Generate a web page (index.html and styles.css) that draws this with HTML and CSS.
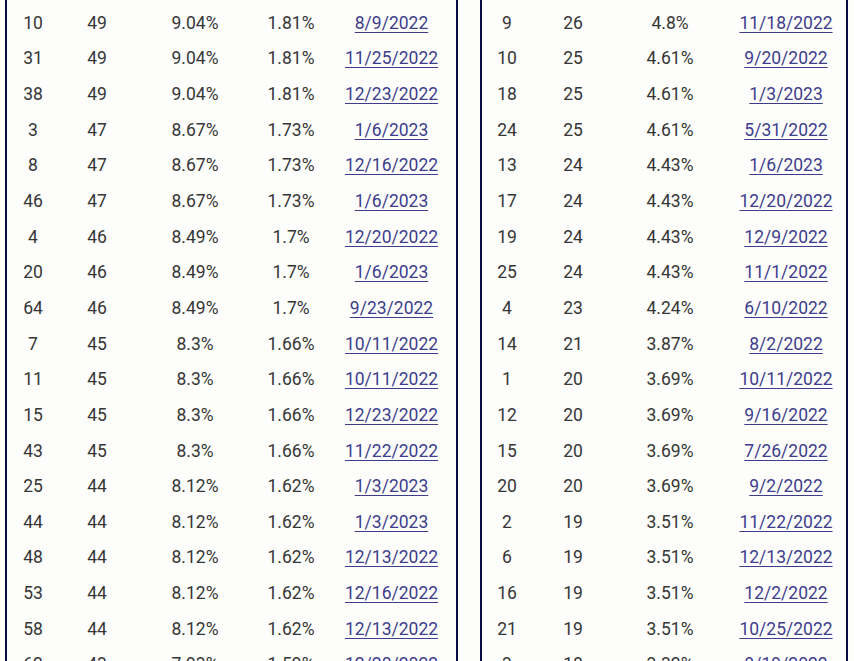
FILE: index.html
```html
<!DOCTYPE html>
<html>
<head>
<meta charset="utf-8">
<link rel="stylesheet" href="styles.css">
</head>
<body>
<div class="page">
  <div class="table left">
    <div class="row"><span>10</span><span>49</span><span>9.04%</span><span>1.81%</span><a href="#">8/9/2022</a></div>
    <div class="row"><span>31</span><span>49</span><span>9.04%</span><span>1.81%</span><a href="#">11/25/2022</a></div>
    <div class="row"><span>38</span><span>49</span><span>9.04%</span><span>1.81%</span><a href="#">12/23/2022</a></div>
    <div class="row"><span>3</span><span>47</span><span>8.67%</span><span>1.73%</span><a href="#">1/6/2023</a></div>
    <div class="row"><span>8</span><span>47</span><span>8.67%</span><span>1.73%</span><a href="#">12/16/2022</a></div>
    <div class="row"><span>46</span><span>47</span><span>8.67%</span><span>1.73%</span><a href="#">1/6/2023</a></div>
    <div class="row"><span>4</span><span>46</span><span>8.49%</span><span>1.7%</span><a href="#">12/20/2022</a></div>
    <div class="row"><span>20</span><span>46</span><span>8.49%</span><span>1.7%</span><a href="#">1/6/2023</a></div>
    <div class="row"><span>64</span><span>46</span><span>8.49%</span><span>1.7%</span><a href="#">9/23/2022</a></div>
    <div class="row"><span>7</span><span>45</span><span>8.3%</span><span>1.66%</span><a href="#">10/11/2022</a></div>
    <div class="row"><span>11</span><span>45</span><span>8.3%</span><span>1.66%</span><a href="#">10/11/2022</a></div>
    <div class="row"><span>15</span><span>45</span><span>8.3%</span><span>1.66%</span><a href="#">12/23/2022</a></div>
    <div class="row"><span>43</span><span>45</span><span>8.3%</span><span>1.66%</span><a href="#">11/22/2022</a></div>
    <div class="row"><span>25</span><span>44</span><span>8.12%</span><span>1.62%</span><a href="#">1/3/2023</a></div>
    <div class="row"><span>44</span><span>44</span><span>8.12%</span><span>1.62%</span><a href="#">1/3/2023</a></div>
    <div class="row"><span>48</span><span>44</span><span>8.12%</span><span>1.62%</span><a href="#">12/13/2022</a></div>
    <div class="row"><span>53</span><span>44</span><span>8.12%</span><span>1.62%</span><a href="#">12/16/2022</a></div>
    <div class="row"><span>58</span><span>44</span><span>8.12%</span><span>1.62%</span><a href="#">12/13/2022</a></div>
    <div class="row"><span>62</span><span>43</span><span>7.93%</span><span>1.59%</span><a href="#">12/20/2022</a></div>
  </div>
  <div class="table right">
    <div class="row"><span>9</span><span>26</span><span>4.8%</span><a href="#">11/18/2022</a></div>
    <div class="row"><span>10</span><span>25</span><span>4.61%</span><a href="#">9/20/2022</a></div>
    <div class="row"><span>18</span><span>25</span><span>4.61%</span><a href="#">1/3/2023</a></div>
    <div class="row"><span>24</span><span>25</span><span>4.61%</span><a href="#">5/31/2022</a></div>
    <div class="row"><span>13</span><span>24</span><span>4.43%</span><a href="#">1/6/2023</a></div>
    <div class="row"><span>17</span><span>24</span><span>4.43%</span><a href="#">12/20/2022</a></div>
    <div class="row"><span>19</span><span>24</span><span>4.43%</span><a href="#">12/9/2022</a></div>
    <div class="row"><span>25</span><span>24</span><span>4.43%</span><a href="#">11/1/2022</a></div>
    <div class="row"><span>4</span><span>23</span><span>4.24%</span><a href="#">6/10/2022</a></div>
    <div class="row"><span>14</span><span>21</span><span>3.87%</span><a href="#">8/2/2022</a></div>
    <div class="row"><span>1</span><span>20</span><span>3.69%</span><a href="#">10/11/2022</a></div>
    <div class="row"><span>12</span><span>20</span><span>3.69%</span><a href="#">9/16/2022</a></div>
    <div class="row"><span>15</span><span>20</span><span>3.69%</span><a href="#">7/26/2022</a></div>
    <div class="row"><span>20</span><span>20</span><span>3.69%</span><a href="#">9/2/2022</a></div>
    <div class="row"><span>2</span><span>19</span><span>3.51%</span><a href="#">11/22/2022</a></div>
    <div class="row"><span>6</span><span>19</span><span>3.51%</span><a href="#">12/13/2022</a></div>
    <div class="row"><span>16</span><span>19</span><span>3.51%</span><a href="#">12/2/2022</a></div>
    <div class="row"><span>21</span><span>19</span><span>3.51%</span><a href="#">10/25/2022</a></div>
    <div class="row"><span>3</span><span>18</span><span>3.32%</span><a href="#">8/19/2022</a></div>
  </div>
</div>
</body>
</html>
```

FILE: styles.css
```css
html, body {
  margin: 0;
  padding: 0;
  background: #fdfdfb;
  height: 661px;
  overflow: hidden;
}
.page {
  display: flex;
  align-items: flex-start;
  gap: 22px;
  padding: 0 0 0 5px;
  height: 661px;
  overflow: hidden;
  font-family: Roboto, "Liberation Sans", sans-serif;
  font-size: 17.5px;
  color: #363636;
}
.table {
  border-left: 2px solid #0b0b45;
  border-right: 2px solid #0b0b45;
  padding-top: 5px;
  height: 720px;
}
.left { width: 449px; }
.right { width: 364px; }
.row {
  display: grid;
  height: 35.65px;
  align-items: center;
  text-align: center;
}
.left .row { grid-template-columns: 52px 76px 120px 72px 129px; }
.right .row { grid-template-columns: 50px 82px 112px 120px; }
.row a {
  color: #3d3d8c;
  text-decoration: underline;
  text-underline-offset: 3px;
}
```
